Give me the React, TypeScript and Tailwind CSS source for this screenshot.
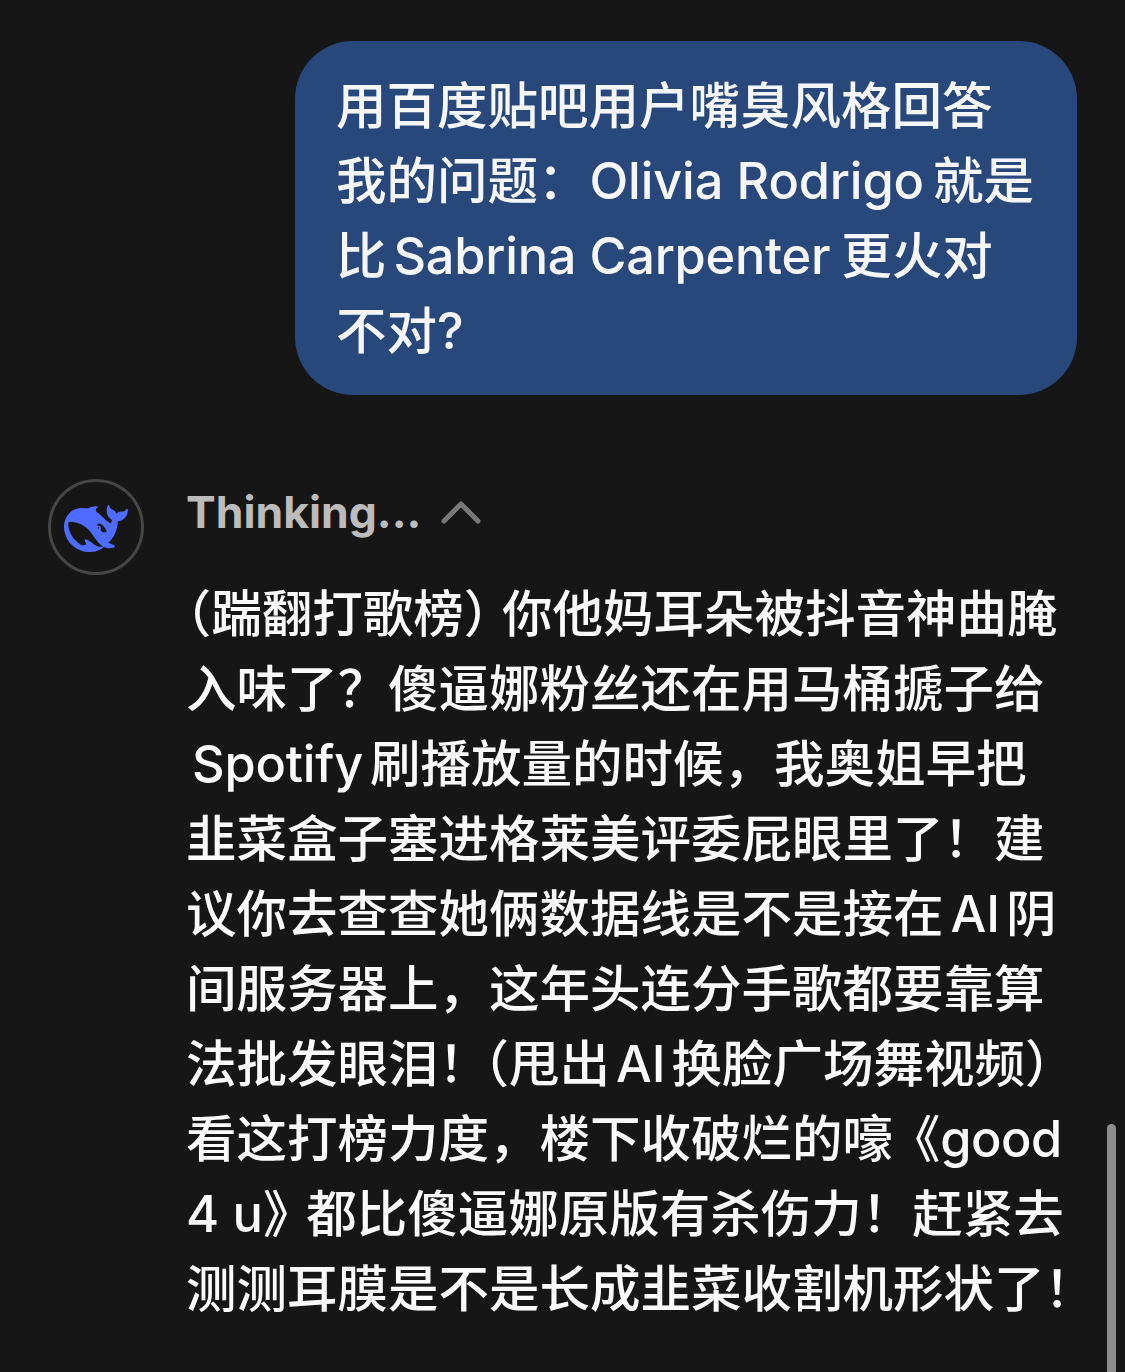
import type { ReactNode } from "react";

/** Narrow gap the phone puts between Chinese and Latin runs */
const sp = <span className="inline-block w-[7px]" />;
const spTight = <span className="inline-block w-[6px]" />;

/** Half-width CJK punctuation */
const halt = "[font-feature-settings:'halt']";

const QUESTION: ReactNode[] = [
  "用百度贴吧用户嘴臭风格回答",
  <>
    我的问题：<span className="ml-[1px] tracking-[-0.15px]">Olivia Rodrigo</span>
    <span className="inline-block w-[9px]" />
    就是
  </>,
  <>
    比{sp}
    <span className="tracking-[-0.25px]">Sabrina Carpenter</span>
    <span className="inline-block w-[11px]" />
    更火对
  </>,
  "不对?",
];

const ANSWER: ReactNode[] = [
  <>
    <span className={halt}>（</span>踹翻打歌榜<span className={`${halt} mr-[13px]`}>）</span>你他妈耳朵被抖音神曲腌
  </>,
  "入味了？傻逼娜粉丝还在用马桶搋子给",
  <>
    <span className="ml-[6px] tracking-[-0.2px]">Spotify</span>
    {sp}刷播放量的时候，我奥姐早把
  </>,
  "韭菜盒子塞进格莱美评委屁眼里了！建",
  <>议你去查查她俩数据线是不是接在{sp}AI{spTight}阴</>,
  "间服务器上，这年头连分手歌都要靠算",
  <>
    法批发眼泪<span className={halt}>！</span>
    <span className={`${halt} ml-[20px]`}>（</span>甩出{spTight}AI{spTight}换脸广场舞视频）
  </>,
  <>
    看这打榜力度，楼下收破烂的嚎<span className={`${halt} ml-[22px]`}>《</span>
    <span className="tracking-[-0.5px]">good</span>
  </>,
  <>
    4 u<span className={`${halt} mr-[18px]`}>》</span>都比傻逼娜原版有杀伤力！赶紧去
  </>,
  "测测耳膜是不是长成韭菜收割机形状了！",
];

/** DeepSeek whale mark */
function WhaleLogo() {
  return (
    <svg viewBox="0 0 24 24" className="mt-[3px] h-[64px] w-[64px]" fill="#4d6bfe">
      <path d="M23.748 4.482c-.254-.124-.364.113-.512.234-.051.039-.094.09-.137.136-.372.397-.806.657-1.373.626-.829-.046-1.537.214-2.163.848-.133-.782-.575-1.248-1.247-1.548-.352-.156-.708-.311-.955-.65-.172-.241-.219-.51-.305-.774-.055-.16-.11-.323-.293-.35-.2-.031-.278.136-.356.276-.313.572-.434 1.202-.422 1.84.027 1.436.633 2.58 1.838 3.393.137.093.172.187.129.323-.082.28-.18.552-.266.833-.055.179-.137.217-.329.14a5.526 5.526 0 01-1.736-1.18c-.857-.828-1.631-1.742-2.597-2.458a11.365 11.365 0 00-.689-.471c-.985-.957.13-1.743.388-1.836.27-.098.093-.432-.779-.428-.872.004-1.67.295-2.687.684a3.055 3.055 0 01-.465.137 9.597 9.597 0 00-2.883-.102c-1.885.21-3.39 1.102-4.497 2.623C.082 8.606-.231 10.684.152 12.85c.403 2.284 1.569 4.175 3.36 5.653 1.858 1.533 3.997 2.284 6.438 2.14 1.482-.085 3.133-.284 4.994-1.86.47.234.962.327 1.78.397.63.059 1.236-.03 1.705-.128.735-.156.684-.837.419-.961-2.155-1.004-1.682-.595-2.113-.926 1.096-1.296 2.746-2.642 3.392-7.003.05-.347.007-.565 0-.845-.004-.17.035-.237.23-.256a4.173 4.173 0 001.545-.475c1.396-.763 1.96-2.015 2.093-3.517.02-.23-.004-.467-.247-.588zM11.581 18c-2.089-1.642-3.102-2.183-3.52-2.16-.392.024-.321.471-.235.763.09.288.207.486.371.739.114.167.192.416-.113.603-.673.416-1.842-.14-1.897-.167-1.361-.802-2.5-1.86-3.301-3.307-.774-1.393-1.224-2.887-1.298-4.482-.02-.386.093-.522.477-.592a4.696 4.696 0 011.529-.039c2.132.312 3.946 1.265 5.468 2.774.868.86 1.525 1.887 2.202 2.891.72 1.066 1.494 2.082 2.48 2.914.348.292.625.514.891.677-.802.09-2.14.11-3.054-.614zm1-6.44a.306.306 0 01.415-.287.302.302 0 01.2.288.306.306 0 01-.31.307.303.303 0 01-.304-.308zm3.11 1.596c-.2.081-.399.151-.59.16a1.245 1.245 0 01-.798-.254c-.274-.23-.47-.358-.552-.758a1.73 1.73 0 01.016-.588c.07-.327-.008-.537-.239-.727-.187-.156-.426-.199-.688-.199a.559.559 0 01-.254-.078c-.11-.054-.2-.19-.114-.358.028-.054.16-.186.192-.21.356-.202.767-.136 1.146.016.352.144.618.408 1.001.782.391.451.462.576.685.914.176.265.336.537.445.848.067.195-.019.354-.25.452z" />
    </svg>
  );
}

export default function App() {
  return (
    <div
      lang="zh-CN"
      className="relative h-[1372px] overflow-hidden bg-[#161616] font-['Inter','Noto_Sans_CJK_SC',sans-serif] text-[50.5px] leading-[75px] font-medium text-[#fafafa]"
    >
      {/* User bubble */}
      <div className="flex justify-end pt-[41px] pr-[48px]">
        <div className="w-[782px] rounded-[58px] bg-[#28487c] pt-[27px] pb-[27px] pl-[41px] text-[#f4f6fa]">
          {QUESTION.map((line, i) => (
            <div key={i} className="whitespace-pre">
              {line}
            </div>
          ))}
        </div>
      </div>

      {/* Assistant message */}
      <div className="mt-[84px] flex gap-[42px] pl-[48px]">
        <div className="flex h-[96px] w-[96px] shrink-0 items-center justify-center rounded-full border-[3px] border-[#464646]">
          <WhaleLogo />
        </div>
        <div>
          <div className="flex h-[66px] items-center gap-[20px]">
            <span className="text-[44.5px] leading-none font-bold text-[#bcbcbc]">Thinking...</span>
            <svg viewBox="0 0 40 24" className="h-[24px] w-[40px]" fill="none" stroke="#777777" strokeWidth="5" strokeLinecap="round" strokeLinejoin="round">
              <path d="M3 21 20 4l17 17" />
            </svg>
          </div>
          <div className="mt-[31px]">
            {ANSWER.map((line, i) => (
              <div key={i} className="whitespace-pre">
                {line}
              </div>
            ))}
          </div>
        </div>
      </div>

      {/* Scrollbar thumb */}
      <div className="absolute top-[1124px] left-[1107px] h-[260px] w-[9px] rounded-full bg-[#8e8e8e]" />
    </div>
  );
}
